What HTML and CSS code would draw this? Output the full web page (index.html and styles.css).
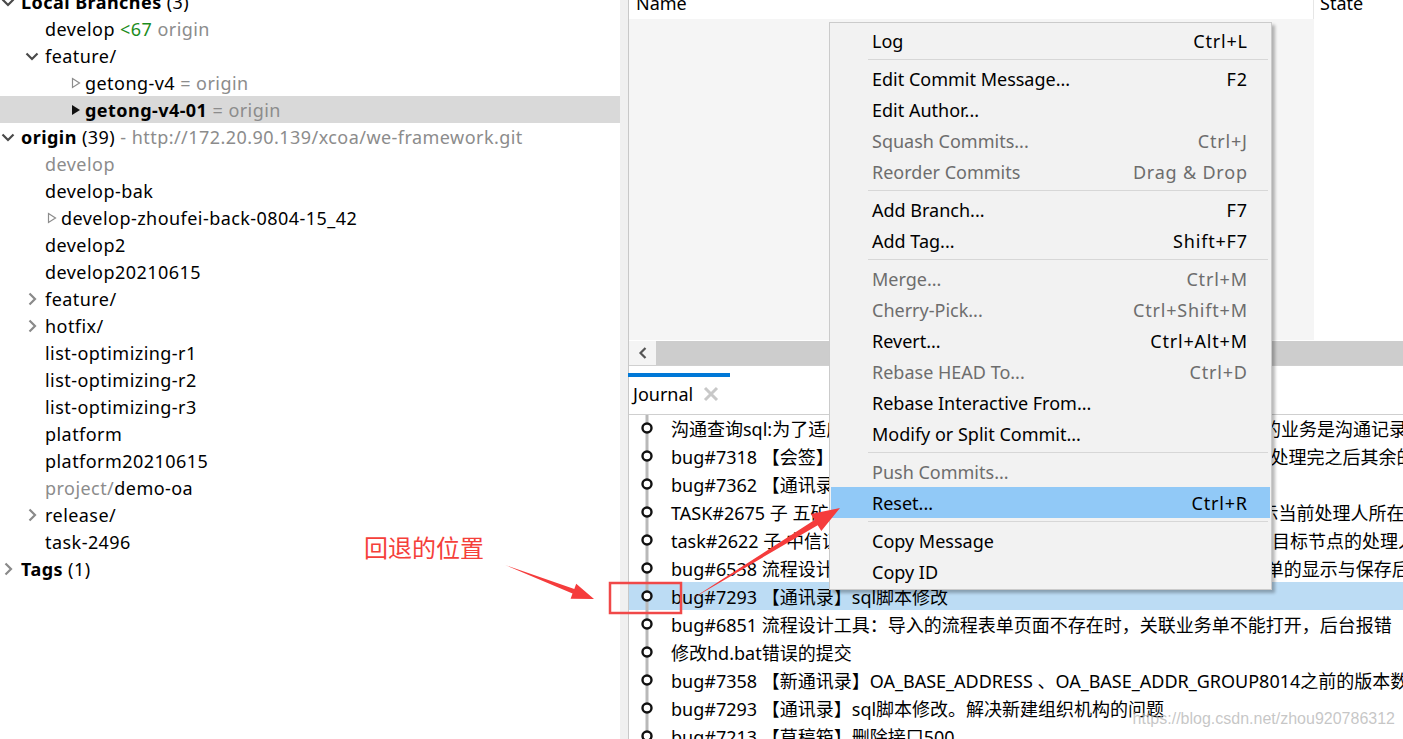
FILE: index.html
```html
<!DOCTYPE html>
<html lang="zh">
<head>
<meta charset="utf-8">
<title>Journal</title>
<link rel="stylesheet" href="styles.css">
</head>
<body>
<div class="app">
  <div class="left">
    <ul class="tree">
      <li class="row l0"><span class="tw"><svg width="14" height="14" viewBox="0 0 14 14"><path d="M1.5 4.5 L7 10 L12.5 4.5" class="chev-d"/></svg></span><span class="lbl"><b>Local Branches</b> (3)</span></li>
      <li class="row l1"><span class="tw"></span><span class="lbl">develop <span class="green">&lt;67</span> <span class="gray">origin</span></span></li>
      <li class="row l1"><span class="tw"><svg width="14" height="14" viewBox="0 0 14 14"><path d="M1.5 4.5 L7 10 L12.5 4.5" class="chev-d"/></svg></span><span class="lbl">feature/</span></li>
      <li class="row l2"><span class="tw"></span><span class="mk"><svg width="10" height="12" viewBox="0 0 10 12"><path d="M1.5 1.5 L8.5 6 L1.5 10.5 Z" class="tri-o"/></svg></span><span class="lbl">getong-v4 <span class="gray">= origin</span></span></li>
      <li class="row l2 sel"><span class="tw"></span><span class="mk"><svg width="10" height="12" viewBox="0 0 10 12"><path d="M1 1 L9 6 L1 11 Z" class="tri-f"/></svg></span><span class="lbl"><b>getong-v4-01</b> <span class="gray">= origin</span></span></li>
      <li class="row l0"><span class="tw"><svg width="14" height="14" viewBox="0 0 14 14"><path d="M1.5 4.5 L7 10 L12.5 4.5" class="chev-d"/></svg></span><span class="lbl"><b>origin</b> (39) <span class="gray">- http://172.20.90.139/xcoa/we-framework.git</span></span></li>
      <li class="row l1"><span class="tw"></span><span class="lbl gray">develop</span></li>
      <li class="row l1"><span class="tw"></span><span class="lbl">develop-bak</span></li>
      <li class="row l1"><span class="tw"></span><span class="mk"><svg width="10" height="12" viewBox="0 0 10 12"><path d="M1.5 1.5 L8.5 6 L1.5 10.5 Z" class="tri-o"/></svg></span><span class="lbl">develop-zhoufei-back-0804-15_42</span></li>
      <li class="row l1"><span class="tw"></span><span class="lbl">develop2</span></li>
      <li class="row l1"><span class="tw"></span><span class="lbl">develop20210615</span></li>
      <li class="row l1"><span class="tw"><svg width="14" height="14" viewBox="0 0 14 14"><path d="M4.5 1.5 L10 7 L4.5 12.5" class="chev-r"/></svg></span><span class="lbl">feature/</span></li>
      <li class="row l1"><span class="tw"><svg width="14" height="14" viewBox="0 0 14 14"><path d="M4.5 1.5 L10 7 L4.5 12.5" class="chev-r"/></svg></span><span class="lbl">hotfix/</span></li>
      <li class="row l1"><span class="tw"></span><span class="lbl">list-optimizing-r1</span></li>
      <li class="row l1"><span class="tw"></span><span class="lbl">list-optimizing-r2</span></li>
      <li class="row l1"><span class="tw"></span><span class="lbl">list-optimizing-r3</span></li>
      <li class="row l1"><span class="tw"></span><span class="lbl">platform</span></li>
      <li class="row l1"><span class="tw"></span><span class="lbl">platform20210615</span></li>
      <li class="row l1"><span class="tw"></span><span class="lbl"><span class="gray">project/</span>demo-oa</span></li>
      <li class="row l1"><span class="tw"><svg width="14" height="14" viewBox="0 0 14 14"><path d="M4.5 1.5 L10 7 L4.5 12.5" class="chev-r"/></svg></span><span class="lbl">release/</span></li>
      <li class="row l1"><span class="tw"></span><span class="lbl">task-2496</span></li>
      <li class="row l0"><span class="tw"><svg width="14" height="14" viewBox="0 0 14 14"><path d="M4.5 1.5 L10 7 L4.5 12.5" class="chev-r"/></svg></span><span class="lbl"><b>Tags</b> (1)</span></li>
    </ul>
  </div>
  <div class="split"></div>
  <div class="right">
    <div class="table">
      <div class="thead">
        <div class="th th-name">Name</div>
        <div class="th th-state">State</div>
      </div>
      <div class="tbody">
        <div class="col-name"></div>
        <div class="col-state"></div>
      </div>
      <div class="hscroll">
        <div class="hbtn"><svg width="12" height="14" viewBox="0 0 12 14"><path d="M8.5 2 L3.5 7 L8.5 12" class="sb-arrow"/></svg></div>
        <div class="hthumb"></div>
      </div>
    </div>
    <div class="tabs">
      <div class="tab">Journal<span class="tab-x"><svg width="16" height="16" viewBox="0 0 16 16"><path d="M2 2 L14 14 M14 2 L2 14" class="x-ico"/></svg></span></div>
    </div>
    <div class="journal">
      <div class="jrow"><span class="g"><svg width="42" height="28" viewBox="0 0 42 28"><line x1="18" y1="0" x2="18" y2="28" class="gl"/><circle cx="18" cy="14" r="4.5" class="gd"/></svg></span><span class="msg">沟通查询sql:为了适应新的查询条件修改查询语句以前沟通查询增加的:用到的业务是沟通记录表以及相关的附件信息</span></div>
      <div class="jrow"><span class="g"><svg width="42" height="28" viewBox="0 0 42 28"><line x1="18" y1="0" x2="18" y2="28" class="gl"/><circle cx="18" cy="14" r="4.5" class="gd"/></svg></span><span class="msg">bug#7318 【会签】会签节点所有人都处理完之前不能流转到下一节点需要 处理完之后其余的人才能继续</span></div>
      <div class="jrow"><span class="g"><svg width="42" height="28" viewBox="0 0 42 28"><line x1="18" y1="0" x2="18" y2="28" class="gl"/><circle cx="18" cy="14" r="4.5" class="gd"/></svg></span><span class="msg">bug#7362 【通讯录】人员排序问题</span></div>
      <div class="jrow"><span class="g"><svg width="42" height="28" viewBox="0 0 42 28"><line x1="18" y1="0" x2="18" y2="28" class="gl"/><circle cx="18" cy="14" r="4.5" class="gd"/></svg></span><span class="msg">TASK#2675 子 五矿集团流程跟踪页面优化，流程图的节点上面需要能够显示当前处理人所在的部门</span></div>
      <div class="jrow"><span class="g"><svg width="42" height="28" viewBox="0 0 42 28"><line x1="18" y1="0" x2="18" y2="28" class="gl"/><circle cx="18" cy="14" r="4.5" class="gd"/></svg></span><span class="msg">task#2622 子 中信证券流程退回时，需要能够选择退回的节点，并且显示出目标节点的处理人员</span></div>
      <div class="jrow"><span class="g"><svg width="42" height="28" viewBox="0 0 42 28"><line x1="18" y1="0" x2="18" y2="28" class="gl"/><circle cx="18" cy="14" r="4.5" class="gd"/></svg></span><span class="msg">bug#6538 流程设计工具：调整流程节点的表单权限之后，修复了流程表单单的显示与保存后数据</span></div>
      <div class="jrow jsel"><span class="g"><svg width="42" height="28" viewBox="0 0 42 28"><line x1="18" y1="0" x2="18" y2="28" class="gl"/><circle cx="18" cy="14" r="4.5" class="gd"/></svg></span><span class="msg">bug#7293 【通讯录】sql脚本修改</span></div>
      <div class="jrow"><span class="g"><svg width="42" height="28" viewBox="0 0 42 28"><line x1="18" y1="0" x2="18" y2="28" class="gl"/><circle cx="18" cy="14" r="4.5" class="gd"/></svg></span><span class="msg">bug#6851 流程设计工具：导入的流程表单页面不存在时，关联业务单不能打开，后台报错</span></div>
      <div class="jrow"><span class="g"><svg width="42" height="28" viewBox="0 0 42 28"><line x1="18" y1="0" x2="18" y2="28" class="gl"/><circle cx="18" cy="14" r="4.5" class="gd"/></svg></span><span class="msg">修改hd.bat错误的提交</span></div>
      <div class="jrow"><span class="g"><svg width="42" height="28" viewBox="0 0 42 28"><line x1="18" y1="0" x2="18" y2="28" class="gl"/><circle cx="18" cy="14" r="4.5" class="gd"/></svg></span><span class="msg">bug#7358 【新通讯录】OA_BASE_ADDRESS 、OA_BASE_ADDR_GROUP8014之前的版本数据迁移</span></div>
      <div class="jrow"><span class="g"><svg width="42" height="28" viewBox="0 0 42 28"><line x1="18" y1="0" x2="18" y2="28" class="gl"/><circle cx="18" cy="14" r="4.5" class="gd"/></svg></span><span class="msg">bug#7293 【通讯录】sql脚本修改。解决新建组织机构的问题</span></div>
      <div class="jrow"><span class="g"><svg width="42" height="28" viewBox="0 0 42 28"><line x1="18" y1="0" x2="18" y2="28" class="gl"/><circle cx="18" cy="14" r="4.5" class="gd"/></svg></span><span class="msg">bug#7213 【草稿箱】删除接口500</span></div>
    </div>
  </div>
</div>

<div class="menu">
  <div class="mi"><span>Log</span><span class="sc">Ctrl+L</span></div>
  <div class="msep"></div>
  <div class="mi"><span>Edit Commit Message...</span><span class="sc">F2</span></div>
  <div class="mi"><span>Edit Author...</span></div>
  <div class="mi dis"><span>Squash Commits...</span><span class="sc">Ctrl+J</span></div>
  <div class="mi dis"><span>Reorder Commits</span><span class="sc">Drag &amp; Drop</span></div>
  <div class="msep"></div>
  <div class="mi"><span>Add Branch...</span><span class="sc">F7</span></div>
  <div class="mi"><span>Add Tag...</span><span class="sc">Shift+F7</span></div>
  <div class="msep"></div>
  <div class="mi dis"><span>Merge...</span><span class="sc">Ctrl+M</span></div>
  <div class="mi dis"><span>Cherry-Pick...</span><span class="sc">Ctrl+Shift+M</span></div>
  <div class="mi"><span>Revert...</span><span class="sc">Ctrl+Alt+M</span></div>
  <div class="mi dis"><span>Rebase HEAD To...</span><span class="sc">Ctrl+D</span></div>
  <div class="mi"><span>Rebase Interactive From...</span></div>
  <div class="mi"><span>Modify or Split Commit...</span></div>
  <div class="msep"></div>
  <div class="mi dis"><span>Push Commits...</span></div>
  <div class="mi hl"><span>Reset...</span><span class="sc">Ctrl+R</span></div>
  <div class="msep"></div>
  <div class="mi"><span>Copy Message</span></div>
  <div class="mi"><span>Copy ID</span></div>
</div>

<svg class="annot" width="1403" height="739" viewBox="0 0 1403 739">
  <polygon points="505,565 574.3,588.9 576.2,583.7 594,599 570.6,598.7 572.5,593.5" class="arrow"/>
  <rect x="610" y="583" width="71" height="30" class="box"/>
  <polygon points="690,600 814.5,520 810.9,514.1 840,508 821.3,531.1 817.7,525.2" class="arrow"/>
</svg>
<div class="note">回退的位置</div>
<div class="wm">https://blog.csdn.net/zhou920786312</div>
</body>
</html>
```

FILE: styles.css
```css
* { box-sizing: border-box; }
html, body {
  margin: 0;
  padding: 0;
  width: 1403px;
  height: 739px;
  overflow: hidden;
  background: #ffffff;
  font-family: "Noto Sans", "Noto Sans CJK SC", sans-serif;
  font-size: 18px;
  color: #000;
}
.app {
  display: flex;
  width: 1403px;
  height: 739px;
}
/* left tree */
.left {
  width: 620px;
  flex: none;
  background: #fff;
  overflow: hidden;
}
.tree {
  list-style: none;
  margin: -12px 0 0 0;
  padding: 0;
}
.row {
  display: flex;
  align-items: center;
  height: 27px;
  white-space: nowrap;
  color: #000;
}
.lbl {
  white-space: pre;
  letter-spacing: 0.45px;
}
.row b { font-weight: 700; }
.row.l0 { padding-left: 0; }
.row.l1 { padding-left: 24px; }
.row.l2 { padding-left: 48px; }
.row.sel { background: #d9d9d9; }
.tw {
  width: 21px;
  flex: none;
  display: flex;
  align-items: center;
}
.tw svg { margin-left: 1px; }
.mk {
  width: 16px;
  flex: none;
  display: flex;
  align-items: center;
  padding-left: 2px;
}
.chev-d { fill: none; stroke: #4a4a4a; stroke-width: 2.2; }
.chev-r { fill: none; stroke: #8a8a8a; stroke-width: 2.2; }
.tri-o { fill: none; stroke: #8c8c8c; stroke-width: 1.2; }
.tri-f { fill: #111; }
.gray { color: #8c8c8c; }
.green { color: #1c8c1c; }

.split {
  width: 8px;
  flex: none;
  background: #f0f0f0;
}
.right {
  flex: 1;
  display: flex;
  flex-direction: column;
  border-left: 1px solid #c8c8c8;
  min-width: 0;
}
.table {
  display: flex;
  flex-direction: column;
  border-bottom: 1px solid #d0d0d0;
}
.thead {
  display: flex;
  margin-top: -10px;
  height: 29px;
  background: #fff;
}
.th {
  line-height: 27px;
  padding-left: 7px;
  white-space: nowrap;
}
.th-name {
  width: 685px;
  border-right: 1px solid #e6e6e6;
}
.th-state { flex: 1; padding-left: 6px; }
.tbody {
  display: flex;
  height: 321px;
}
.col-name { width: 685px; background: #f5f5f5; }
.col-state { flex: 1; background: #fff; }
.hscroll {
  display: flex;
  height: 25px;
  padding-top: 1px;
}
.hbtn {
  width: 27px;
  flex: none;
  display: flex;
  align-items: center;
  justify-content: center;
  background: #f4f4f4;
}
.sb-arrow { fill: none; stroke: #555; stroke-width: 2.2; }
.hthumb { flex: 1; background: #cdcdcd; }

.tabs {
  height: 48px;
  padding-top: 7px;
  display: flex;
  background: #fff;
}
.tab {
  width: 102px;
  margin-left: -1px;
  border-top: 4px solid #0078d7;
  padding-left: 5px;
  display: flex;
  align-items: center;
  height: 41px;
  padding-bottom: 3px;
}
.tab-x {
  margin-left: 10px;
  display: flex;
  align-items: center;
}
.x-ico { stroke: #c8c8c8; stroke-width: 3; }

.journal {
  flex: 1;
  border-top: 1px solid #cfcfcf;
  background: #fff;
  overflow: hidden;
}
.jrow {
  display: flex;
  align-items: center;
  height: 28px;
  white-space: nowrap;
}
.jrow:first-child { margin-top: -1px; }
.jrow.jsel { background: #bcdcf4; }
.g { width: 42px; flex: none; height: 28px; }
.g svg { display: block; }
.gl { stroke: #b9b9b9; stroke-width: 3; }
.gd { fill: #fff; stroke: #111; stroke-width: 2.4; }
.msg { white-space: pre; }

/* context menu */
.menu {
  position: absolute;
  left: 829px;
  top: 22px;
  width: 443px;
  background: #f2f2f2;
  border: 1px solid #cbcbcb;
  padding: 2px 1px 2px 1px;
  box-shadow: 3px 3px 3px rgba(0, 0, 0, 0.28);
}
.mi {
  display: flex;
  justify-content: space-between;
  align-items: center;
  height: 31px;
  padding-left: 41px;
  padding-right: 23px;
  white-space: nowrap;
  color: #000;
}
.sc {
  letter-spacing: 0.8px;
  margin-right: -0.8px;
}
.mi.dis { color: #6d6d6d; }
.mi.hl { background: #91c9f7; }
.msep {
  height: 7px;
  display: flex;
  align-items: center;
  padding-left: 37px;
  padding-right: 2px;
}
.msep::before {
  content: "";
  display: block;
  height: 1px;
  width: 100%;
  background: #d7d7d7;
}

/* annotations */
.annot {
  position: absolute;
  left: 0;
  top: 0;
  pointer-events: none;
}
.arrow { fill: #f53c3c; }
.box { fill: none; stroke: #f04848; stroke-width: 2.5; }
.note {
  position: absolute;
  left: 364px;
  top: 530px;
  font-family: "Noto Sans CJK SC", sans-serif;
  font-size: 24px;
  line-height: 34px;
  color: #f5403a;
}
.wm {
  position: absolute;
  right: 8px;
  top: 709px;
  font-family: "Liberation Sans", sans-serif;
  font-size: 16px;
  line-height: 20px;
  color: rgba(180, 180, 180, 0.75);
}
```
